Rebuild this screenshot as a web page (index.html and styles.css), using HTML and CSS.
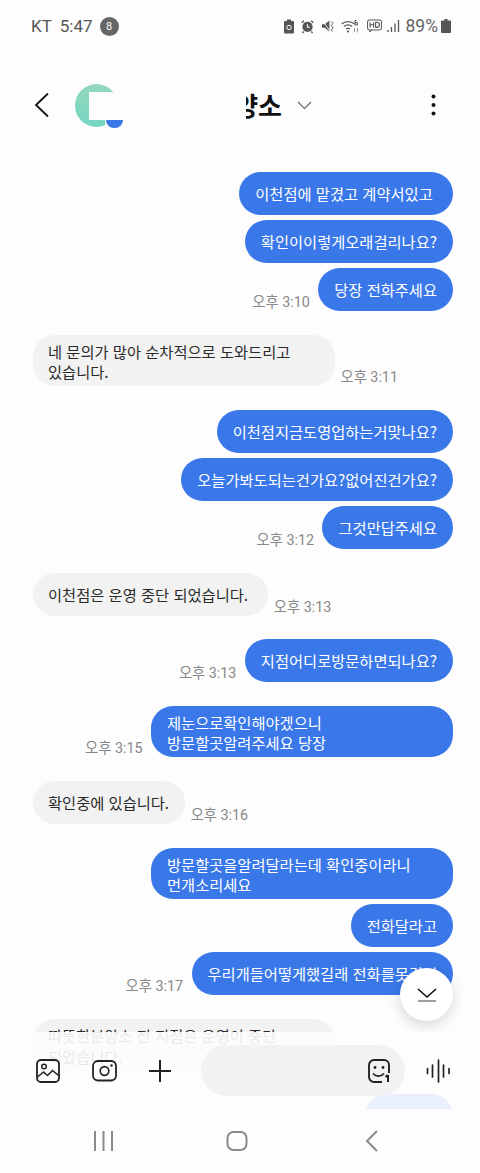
FILE: index.html
```html
<!DOCTYPE html>
<html lang="ko">
<head>
    <meta charset="UTF-8">
    <meta name="viewport" content="width=device-width, initial-scale=1.0">
    <title>메시지</title>
    <link rel="stylesheet" href="styles.css">
</head>
<body>
    <section class="phone">
        <section class="status">
            <div class="status-left">
                <span class="carrier">KT</span>
                <span class="clock">5:47</span>
                <span class="count">8</span>
            </div>
            <div class="status-right">
                <svg width="10" height="15" viewBox="0 0 10 15"><path d="M3 0.500h4v1.500h2a1 1 0 0 1 1 1v10.500a1 1 0 0 1-1 1H1a1 1 0 0 1-1-1V3a1 1 0 0 1 1-1h2z" fill="#555"/><circle cx="5" cy="8.500" r="2.200" fill="none" stroke="#fff" stroke-width="1"/></svg>
                <svg width="13" height="15" viewBox="0 0 14 15"><circle cx="7" cy="8" r="5.500" fill="#555"/><path d="M7 5v3.300h2.500" fill="none" stroke="#fff" stroke-width="1.200"/><path d="M0.800 3.500L3 1.200M13.200 3.500L11 1.200M3 13l-1.500 1.500M11 13l1.500 1.500" stroke="#555" stroke-width="1.500"/></svg>
                <svg class="mute" width="12" height="14" viewBox="0 0 13 14"><path d="M0 5h3l5-4v12l-5-4H0z" fill="#555"/><path d="M0.500 1l8.500 12" stroke="#fff" stroke-width="1"/><path d="M10 2l2 2-2 2.500 2 2.500-2 2.500 1.500 1.500" fill="none" stroke="#555" stroke-width="1"/></svg>
                <svg width="19" height="15" viewBox="0 0 19 15"><path d="M0.500 5a10 10 0 0 1 13 0M2.800 7.500a7 7 0 0 1 8.400 0M5 10a4 4 0 0 1 4 0" fill="none" stroke="#555" stroke-width="1.200"/><circle cx="7" cy="12.500" r="1.100" fill="#555"/><path d="M13.500 13V9M16.500 9v4.500" stroke="#999" stroke-width="1"/><path d="M15.500 1.500h-1.500v4.500h2.500v-2.300h-2.500" fill="none" stroke="#555" stroke-width="1"/></svg>
                <svg width="15" height="14" viewBox="0 0 16 14"><rect x="0.600" y="0.600" width="14.800" height="10.600" rx="2" fill="none" stroke="#555" stroke-width="1.100"/><path d="M3 12l0 1.500 2-2" fill="#555" stroke="#555"/><path d="M3.300 3v5.500M7 3v5.500M3.300 5.700H7M9.200 3v5.500h1.300a2.500 2.500 0 0 0 0-5.500z" fill="none" stroke="#555" stroke-width="1.200"/></svg>
                <svg class="signal" width="13" height="14" viewBox="0 0 13 14"><path d="M1 13v-2M4.500 13V8M8 13V4.500M11.500 13V1" stroke="#555" stroke-width="1.300"/></svg>
                <span class="battery-text">89%</span>
                <svg width="10" height="14" viewBox="0 0 10 14"><path d="M3.500 0h3v1.500h2.500a1 1 0 0 1 1 1V13a1 1 0 0 1-1 1H1a1 1 0 0 1-1-1V2.500a1 1 0 0 1 1-1h2.500z" fill="#555"/></svg>
            </div>
        </section>

        <section class="top">
            <svg class="back" width="16" height="26" viewBox="0 0 16 26"><path d="M14 1.500L2 13l12 11.500" fill="none" stroke="#111" stroke-width="1.800"/></svg>
            <div class="avatar">
                <div class="avatar-mask"></div>
                <div class="avatar-cut"></div>
                <div class="avatar-badge"></div>
            </div>
            <div class="title-wrap">
                <div class="title"><span>양소</span></div>
                <svg width="15" height="9" viewBox="0 0 15 9"><path d="M1 1l6.500 6.500L14 1" fill="none" stroke="#666" stroke-width="1.100"/></svg>
            </div>
            <svg class="more" width="5" height="22" viewBox="0 0 5 22"><circle cx="2.500" cy="2.500" r="2" fill="#111"/><circle cx="2.500" cy="11" r="2" fill="#111"/><circle cx="2.500" cy="19.500" r="2" fill="#111"/></svg>
        </section>

        <section class="chat">
            <div class="group">
                <div class="row sent"><p class="bubble">이천점에 맡겼고 계약서있고&nbsp;</p></div>
                <div class="row sent"><p class="bubble">확인이이렇게오래걸리나요?</p></div>
                <div class="row sent"><span class="time">오후 3:10</span><p class="bubble">당장 전화주세요</p></div>
            </div>
            <div class="group">
                <div class="row"><p class="bubble recv two">네 문의가 많아 순차적으로 도와드리고<br>있습니다.</p><span class="time">오후 3:11</span></div>
            </div>
            <div class="group">
                <div class="row sent"><p class="bubble">이천점지금도영업하는거맞나요?</p></div>
                <div class="row sent"><p class="bubble">오늘가봐도되는건가요?없어진건가요?</p></div>
                <div class="row sent"><span class="time">오후 3:12</span><p class="bubble">그것만답주세요</p></div>
            </div>
            <div class="group">
                <div class="row"><p class="bubble recv">이천점은 운영 중단 되었습니다.&nbsp;</p><span class="time">오후 3:13</span></div>
            </div>
            <div class="group">
                <div class="row sent"><span class="time">오후 3:13</span><p class="bubble">지점어디로방문하면되나요?</p></div>
            </div>
            <div class="group">
                <div class="row sent"><span class="time">오후 3:15</span><p class="bubble two">제눈으로확인해야겠으니<br>방문할곳알려주세요 당장</p></div>
            </div>
            <div class="group">
                <div class="row"><p class="bubble recv">확인중에 있습니다.</p><span class="time">오후 3:16</span></div>
            </div>
            <div class="group">
                <div class="row sent"><p class="bubble two">방문할곳을알려달라는데 확인중이라니<br>먼개소리세요</p></div>
                <div class="row sent"><p class="bubble">전화달라고</p></div>
                <div class="row sent"><span class="time">오후 3:17</span><p class="bubble">우리개들어떻게했길래 전화를못걸어</p></div>
            </div>
            <div class="group">
                <div class="row"><p class="bubble recv two">따뜻한분양소 전 지점은 운영이 중단<br>되었습니다.</p></div>
            </div>
            <div class="group">
                <div class="row sent"><p class="bubble pale">&nbsp;</p></div>
            </div>

            <button class="scroll-down">
                <svg width="20" height="14" viewBox="0 0 20 14"><path d="M1 1l9 8 9-8" fill="none" stroke="#111" stroke-width="1.600"/><path d="M1 13h18" stroke="#888" stroke-width="1.600"/></svg>
            </button>

            <div class="composer">
                <svg class="tool-image" width="24" height="24" viewBox="0 0 24 24"><rect x="1" y="1" width="22" height="22" rx="4" fill="none" stroke="#222" stroke-width="1.800"/><circle cx="8" cy="7.500" r="2.300" fill="none" stroke="#222" stroke-width="1.500"/><path d="M1.500 18l6-5 4 3.500 5-5 6 5" fill="none" stroke="#222" stroke-width="1.600"/></svg>
                <svg class="tool-camera" width="26" height="22" viewBox="0 0 26 22"><rect x="1" y="1" width="23" height="19.500" rx="5" fill="none" stroke="#222" stroke-width="1.800"/><circle cx="12.500" cy="11" r="4.300" fill="none" stroke="#222" stroke-width="1.700"/><circle cx="19.500" cy="5.500" r="1.200" fill="#222"/></svg>
                <svg class="tool-plus" width="24" height="24" viewBox="0 0 24 24"><path d="M12 1v22M1 12h22" stroke="#222" stroke-width="2"/></svg>
                <div class="input">
                    <svg width="24" height="24" viewBox="0 0 24 24"><path d="M15 23H7a5 5 0 0 1-5-5V6a5 5 0 0 1 5-5h10a5 5 0 0 1 5 5v8" fill="none" stroke="#222" stroke-width="1.900"/><circle cx="8" cy="8.500" r="1.400" fill="#222"/><circle cx="16" cy="8.500" r="1.400" fill="#222"/><path d="M6 14.500c3 3.500 8 3.500 11 0" fill="none" stroke="#222" stroke-width="1.800"/><path d="M21 16v7M18.500 18l2.500-2" stroke="#222" stroke-width="2"/></svg>
                </div>
                <svg class="voice" width="25" height="24" viewBox="0 0 25 24"><path d="M1.500 9.500v5M6.500 6v12M12.500 1v22M17.500 6v12M23 9.500v5" stroke="#222" stroke-width="1.700" stroke-linecap="round"/></svg>
            </div>
        </section>

        <section class="nav">
            <svg width="22" height="20" viewBox="0 0 22 20"><path d="M2 0v20M10.500 0v20M19 0v20" stroke="#8a8a8a" stroke-width="2"/></svg>
            <svg class="nav-home" width="22" height="20" viewBox="0 0 22 20"><rect x="1.500" y="1" width="19" height="18" rx="6" fill="none" stroke="#8a8a8a" stroke-width="2"/></svg>
            <svg width="13" height="22" viewBox="0 0 13 22"><path d="M12 1L2 11l10 10" fill="none" stroke="#8a8a8a" stroke-width="2"/></svg>
        </section>
    </section>
</body>
</html>
```

FILE: styles.css
```css
body {
    margin: 0;
    padding: 0;
    background-color: #fdfdfd;
    font-family: "Noto Sans CJK KR", "Liberation Sans", sans-serif;
}

.phone {
    display: flex;
    flex-direction: column;
    width: 480px;
    height: 1173px;
    overflow: hidden;
}

.status {
    display: flex;
    justify-content: space-between;
    align-items: center;
    height: 52px;
    padding: 0 29px 0 31px;
    flex: none;
}

.status-left {
    display: flex;
    align-items: center;
    color: #555;
    font-family: Roboto, sans-serif;
    font-size: 17px;
}

.carrier {
    margin-right: 8px;
}

.count {
    display: flex;
    align-items: center;
    justify-content: center;
    width: 19px;
    height: 19px;
    margin-left: 7px;
    border-radius: 50%;
    background-color: #666;
    color: #fff;
    font-size: 11px;
}

.status-right {
    display: flex;
    align-items: center;
    gap: 7px;
}

.mute {
    margin-left: 1px;
}

.signal {
    margin-left: -2px;
}

.battery-text {
    margin: 0 -4px 0 -1px;
    color: #666;
    font-family: Roboto, sans-serif;
    font-size: 17.500px;
}

.top {
    display: flex;
    align-items: center;
    height: 106px;
    padding: 0 44px 0 34px;
    flex: none;
}

.avatar {
    position: relative;
    width: 43px;
    height: 43px;
    margin-left: 25px;
    border-radius: 50%;
    background: linear-gradient(#93d8bb, #74d6c2);
}

/* white boxes over the avatar, the picture is blanked out */
.avatar-mask {
    position: absolute;
    left: 14px;
    top: 8px;
    width: 32px;
    height: 28px;
    background-color: #fdfdfd;
}

.avatar-cut {
    position: absolute;
    left: 30px;
    top: 36px;
    width: 16px;
    height: 8px;
    background-color: #fdfdfd;
}

.avatar-badge {
    position: absolute;
    left: 31px;
    top: 36px;
    width: 17px;
    height: 8px;
    border-radius: 0 0 9px 9px;
    background-color: #3b78e7;
}

.title-wrap {
    display: flex;
    align-items: center;
    gap: 15px;
    margin-left: 128px;
    flex: 1;
}

.title {
    display: flex;
    justify-content: flex-end;
    width: 36px;
    overflow: hidden;
    color: #111;
    font-size: 26px;
    font-weight: 700;
    line-height: 30px;
    white-space: nowrap;
}

.title span {
    flex: none;
}

.chat {
    position: relative;
    display: flex;
    flex-direction: column;
    gap: 23.700px;
    flex: 1;
    padding: 14px 27px 0 33px;
    overflow: hidden;
}

.group {
    display: flex;
    flex-direction: column;
    gap: 5px;
    flex: none;
}

.row {
    display: flex;
    align-items: flex-end;
    gap: 5.500px;
}

.sent {
    justify-content: flex-end;
    gap: 8.500px;
}

.bubble {
    margin: 0;
    padding: 9px 16px 10px;
    border-radius: 22px;
    background-color: #3a78ea;
    color: #fff;
    font-size: 15.300px;
    line-height: 24px;
}

.two {
    box-sizing: border-box;
    width: 302px;
    padding: 6px 16px 4.500px;
    line-height: 20.500px;
}

.recv {
    padding-left: 15px;
    background-color: #f2f2f2;
    color: #2a2a2a;
}

.pale {
    width: 56px;
}

.time {
    color: #888;
    font-family: Roboto, "Noto Sans CJK KR", sans-serif;
    font-size: 14.300px;
    line-height: 18px;
}

.scroll-down {
    position: absolute;
    right: 27px;
    top: 810px;
    display: flex;
    align-items: center;
    justify-content: center;
    width: 53px;
    height: 53px;
    padding: 0;
    border: 0;
    border-radius: 50%;
    background-color: #fff;
    box-shadow: 0 4px 14px rgba(0, 0, 0, .16);
}

.composer {
    position: absolute;
    left: 0;
    right: 0;
    bottom: 0;
    display: flex;
    align-items: center;
    box-sizing: border-box;
    height: 77px;
    padding-left: 36px;
    background-color: rgba(253, 253, 253, .9);
}

.tool-camera {
    margin-left: 32px;
}

.tool-plus {
    margin-left: 30px;
}

.input {
    display: flex;
    align-items: center;
    justify-content: flex-end;
    box-sizing: border-box;
    width: 204px;
    height: 51px;
    margin-left: 29px;
    padding-right: 14px;
    border-radius: 26px;
    background-color: #f2f2f2;
}

.voice {
    margin-left: 21px;
}

.nav {
    display: flex;
    align-items: center;
    height: 64px;
    padding-left: 93px;
    background-color: #fdfdfd;
    flex: none;
}

.nav-home {
    margin: 0 117px 0 111px;
}
```
